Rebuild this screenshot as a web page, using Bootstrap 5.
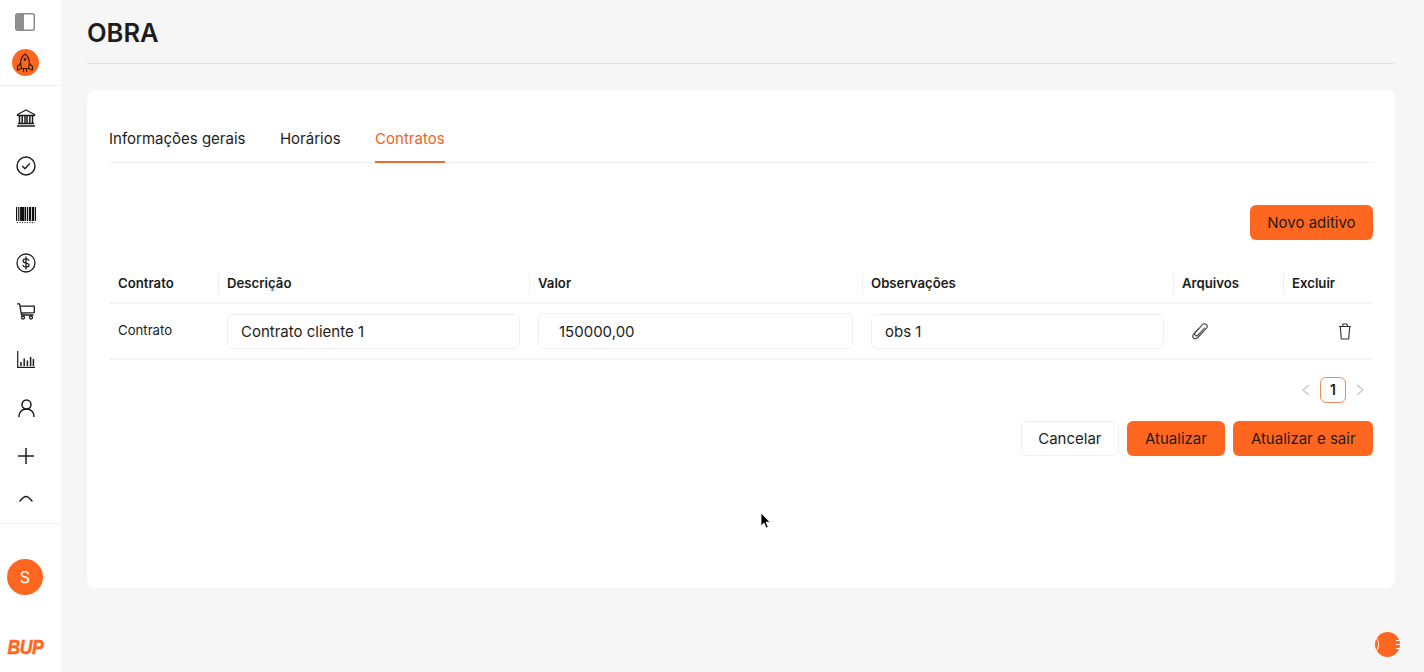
<!DOCTYPE html>
<html lang="pt">
<head>
<meta charset="utf-8">
<title>OBRA</title>
<link href="https://cdn.jsdelivr.net/npm/bootstrap@5.3.0/dist/css/bootstrap.min.css" rel="stylesheet">
<style>
html,body{height:100%;overflow:hidden}
body{background:#f6f6f6;font-family:Inter,"Liberation Sans",sans-serif;color:#1c1c1c;font-size:15px}
.app-shell{height:672px;position:relative}
.side-rail{width:61px;flex:none;background:#fff;height:672px}
.rail-top{height:86px;border-bottom:1px solid #f0f0f0;padding:13px 9px 0 0}
.rail-top svg{display:block}
.rail-top>svg{margin-left:-2px}
.rocket-dot{width:27px;height:27px;border-radius:50%;background:#ff6720;margin-top:18px;margin-left:-2px}
.rail-nav{height:438px;border-bottom:1px solid #f0f0f0;padding:8px 9px 0 0}
.rail-item{height:48.3px;color:#1c1c1c}
.rail-item.last-item{height:36px;padding-top:0}
.rail-foot{padding:35px 9px 0 0}
.avatar-dot{width:36px;height:36px;border-radius:50%;background:#ff6720;color:#fff;font-size:16px;margin-left:-2px}
.brand-mark{margin-top:41px;margin-left:-2px;color:#ff6720;font:italic 700 22px/22px "Liberation Sans",sans-serif;-webkit-text-stroke:.6px #ff6720;letter-spacing:-.5px;transform:scale(.8,.95)}
.main-area{padding:0 29px 0 26px;min-width:0}
.page-head{height:64px;border-bottom:1px solid #e2e2e2;margin-bottom:26px}
.page-title{font-size:25.5px;font-weight:600;line-height:29px;margin:0;padding-top:18px;color:#1c1c1c}
.sheet{background:#fff;border-radius:8px;height:498px;padding:27px 22px 0}
.tab-row{height:46px;border-bottom:1px solid #f0f0f0;gap:34.5px}
.tab-link{height:46px;line-height:44px;color:#1c1c1c;font-size:15px;text-decoration:none;white-space:nowrap}
.tab-link.on{color:#f26322;border-bottom:2px solid #ee6a35}
.brand-btn{background:#ff6720;border:0;color:#1c1c1c;font-size:15px;height:35px;border-radius:6px;padding:0 17.5px;line-height:35px;white-space:nowrap}
.brand-btn.wide-pad{padding:0 18.5px}
.plain-btn{background:#fff;border:1px solid #f0f0f0;color:#1c1c1c;font-size:15px;height:35px;border-radius:6px;padding:0 16px;line-height:33px}
.add-row{margin-top:42px;margin-bottom:25px}
.grid-table{table-layout:fixed;width:100%;margin:0;border-collapse:collapse}
.grid-table th{height:38px;font-size:13.2px;font-weight:600;padding:0 9px;border-bottom:2px solid #f5f5f5;position:relative;vertical-align:middle;color:#1c1c1c}
.grid-table th+th::before{content:"";position:absolute;left:0;top:9px;height:20px;width:1px;background:#efefef}
.grid-table td{height:56px;padding:0 9px;border-bottom:2px solid #f5f5f5;vertical-align:middle;font-size:13.2px;color:#1c1c1c}
.cell-input{width:100%;height:35px;border:1px solid #f0f0f0;border-radius:6px;padding:0 13px;font-size:15px;color:#1c1c1c;font-family:inherit;outline:0;background:#fff}
.cell-input.num{padding-left:20px;height:36px}
.clip-icon{margin-left:10px}
.trash-icon{margin-right:12px}
.pager-row{margin-top:17px;height:26px;gap:10px;padding-right:9px}
.pager-box{width:26px;height:26px;border:1px solid #f08a5a;border-radius:6px;font-size:14px;font-weight:600;line-height:24px;text-align:center}
.action-row{margin-top:18px;gap:8px}
.cursor-mark{position:absolute;left:760px;top:512px}
.help-dot{position:absolute;left:1375px;top:632px;width:25px;height:25px;border-radius:50%;background:#ff6720;overflow:hidden}
.help-dot::before{content:"";position:absolute;left:-7px;top:4px;width:11px;height:17px;border:1px solid #fff;border-radius:50%}
.help-dot::after{content:"";position:absolute;right:0;top:8px;width:4px;height:9px;border-top:1px solid #fff;border-bottom:1px solid #fff;background:linear-gradient(#fff,#fff) center/100% 1px no-repeat}
</style>
</head>
<body>
<div class="app-shell d-flex">
  <aside class="side-rail d-flex flex-column">
    <div class="rail-top d-flex flex-column align-items-center">
      <svg width="20" height="18" viewBox="0 0 20 18"><rect x=".75" y=".75" width="18.5" height="16.5" rx="2" fill="#fff" stroke="#8a8a8a" stroke-width="1.5"/><path d="M1 3a2 2 0 0 1 2-2h6v16H3a2 2 0 0 1-2-2z" fill="#8f8f8f"/></svg>
      <div class="rocket-dot d-flex align-items-center justify-content-center">
        <svg width="20" height="20" viewBox="0 0 20 20" fill="none" stroke="#3a1a08" stroke-width="1.2" stroke-linejoin="round" stroke-linecap="round"><path d="M10 1C13 3.5 14.5 7 14.5 10L13.5 15.5H6.500L5.500 10C5.500 7 7 3.500 10 1z"/><path d="M5.700 10.500L2.500 13.500V17L6.500 15.500M14.300 10.500L17.500 13.500V17L13.500 15.500"/><circle cx="10" cy="6.500" r=".8"/><path d="M8.500 15.500v3M11.500 15.500v3"/></svg>
      </div>
    </div>
    <nav class="rail-nav d-flex flex-column">
      <div class="rail-item d-flex align-items-center justify-content-center">
        <svg width="20" height="18" viewBox="0 0 20 18" fill="none" stroke="#1c1c1c" stroke-width="1.3"><path d="M1.500 5.500L10 1l8.500 4.500v1h-17z" stroke-linejoin="round"/><path d="M3.500 7v7M6.200 7v7M9 7v7M11 7v7M13.800 7v7M16.500 7v7" stroke-width="1.500"/><path d="M2 14.600h16M1 17h18" stroke-width="1.500"/></svg>
      </div>
      <div class="rail-item d-flex align-items-center justify-content-center">
        <svg width="20" height="20" viewBox="0 0 20 20" fill="none" stroke="#1c1c1c" stroke-width="1.400"><circle cx="10" cy="10" r="9"/><path d="M6.500 10.200l2.500 2.500 4.500-5" stroke-linecap="round" stroke-linejoin="round"/></svg>
      </div>
      <div class="rail-item d-flex align-items-center justify-content-center">
        <svg width="20" height="16" viewBox="0 0 20 16" stroke="#111" fill="none"><path stroke-width="1.200" d="M.6 0v14M2.800 0v14M9.500 0v14M11.500 0v14M19.400 0v14"/><path stroke-width="2.200" d="M5.200 0v14M7.400 0v14M14 0v14M17 0v14"/><path stroke-width="1.200" stroke-dasharray="1 1.500" d="M1 15.500h18"/></svg>
      </div>
      <div class="rail-item d-flex align-items-center justify-content-center">
        <svg width="20" height="20" viewBox="0 0 20 20" fill="none" stroke="#1c1c1c" stroke-width="1.300"><circle cx="10" cy="10" r="9"/><path d="M12.800 7.400C12.400 6.300 11.300 5.800 10 5.800c-1.600 0-2.900.7-2.900 2.100 0 3 5.900 1.300 5.900 4.200 0 1.400-1.400 2.100-3 2.100-1.400 0-2.600-.6-3-1.800M10 4v12" stroke-linecap="round"/></svg>
      </div>
      <div class="rail-item d-flex align-items-center justify-content-center">
        <svg width="18" height="17" viewBox="0 0 18 17" fill="none" stroke="#1c1c1c" stroke-width="1.300"><path d="M0 .8h2.600L4.500 12h12" stroke-linejoin="round"/><path d="M3 3.200h14.300V9.600L4.200 10" stroke-linejoin="round"/><circle cx="6" cy="14.500" r="1.500"/><circle cx="14" cy="14.500" r="1.500"/></svg>
      </div>
      <div class="rail-item d-flex align-items-center justify-content-center">
        <svg width="18" height="17" viewBox="0 0 18 17" fill="none" stroke="#1c1c1c"><path stroke-width="1.200" d="M.7 0v16.300H18"/><path stroke-width="1.500" d="M4 11v4M7.200 7.500V15M10.400 9.500V15M13.600 6v9M16.400 8v7"/></svg>
      </div>
      <div class="rail-item d-flex align-items-center justify-content-center">
        <svg width="17" height="18" viewBox="0 0 17 18" fill="none" stroke="#1c1c1c" stroke-width="1.500"><circle cx="8.500" cy="5.500" r="4.500"/><path d="M1 17.500c0-4.500 3.200-7.500 7.500-7.500S16 13 16 17.500" stroke-linecap="round"/></svg>
      </div>
      <div class="rail-item d-flex align-items-center justify-content-center">
        <svg width="16" height="16" viewBox="0 0 16 16" stroke="#1c1c1c" stroke-width="1.500"><path d="M8 0v16M0 8h16"/></svg>
      </div>
      <div class="rail-item last-item d-flex align-items-center justify-content-center">
        <svg width="14" height="7" viewBox="0 0 14 7" fill="none" stroke="#1c1c1c" stroke-width="1.400"><path d="M1 6C3 3.500 5 1.500 7 1.500S11 3.500 13 6" stroke-linecap="round"/></svg>
      </div>
    </nav>
    <div class="rail-foot d-flex flex-column align-items-center">
      <div class="avatar-dot d-flex align-items-center justify-content-center">S</div>
      <div class="brand-mark">BUP</div>
    </div>
  </aside>
  <main class="main-area flex-grow-1">
    <header class="page-head"><h1 class="page-title">OBRA</h1></header>
    <section class="sheet">
      <div class="tab-row d-flex">
        <a class="tab-link" href="#">Informações gerais</a>
        <a class="tab-link" href="#">Horários</a>
        <a class="tab-link on" href="#">Contratos</a>
      </div>
      <div class="add-row d-flex justify-content-end"><button class="brand-btn" type="button">Novo aditivo</button></div>
      <table class="grid-table">
        <colgroup><col style="width:109px"><col style="width:311px"><col style="width:333px"><col style="width:311px"><col style="width:110px"><col></colgroup>
        <thead><tr><th>Contrato</th><th>Descrição</th><th>Valor</th><th>Observações</th><th>Arquivos</th><th>Excluir</th></tr></thead>
        <tbody><tr>
          <td>Contrato</td>
          <td><input class="cell-input" value="Contrato cliente 1"></td>
          <td><input class="cell-input num" value="150000,00"></td>
          <td><input class="cell-input" value="obs 1"></td>
          <td><svg class="clip-icon" width="17" height="17" viewBox="0 0 17 17" fill="none" stroke="#444" stroke-width="1.100" stroke-linecap="round"><path d="M6.500 5.500L2 10.500c-1.800 2-1.500 3.500-.5 4.500s2.800 1 4.300-.5l8.500-9c1.500-1.700 1.200-3-.3-4.200-1.200-.9-2.700-.6-3.800.5L3.500 9.500c-1 1.200-1 2.200-.3 2.900s1.800.6 2.800-.4l6.500-7"/></svg></td>
          <td class="text-end"><svg class="trash-icon" width="14" height="17" viewBox="0 0 14 17" fill="none" stroke="#333" stroke-width="1.100" stroke-linejoin="round"><path d="M1 3.500h12M4.500 3.500l.6-2.500h3.800l.6 2.500M2.300 3.500l1 12.500h7.400l1-12.500"/></svg></td>
        </tr></tbody>
      </table>
      <div class="pager-row d-flex justify-content-end align-items-center">
        <svg width="8" height="12" viewBox="0 0 8 12" fill="none" stroke="#c4c4c4" stroke-width="1.200"><path d="M7 1L1 6l6 5"/></svg>
        <div class="pager-box">1</div>
        <svg width="8" height="12" viewBox="0 0 8 12" fill="none" stroke="#c4c4c4" stroke-width="1.200"><path d="M1 1l6 5-6 5"/></svg>
      </div>
      <div class="action-row d-flex justify-content-end">
        <button class="plain-btn" type="button">Cancelar</button>
        <button class="brand-btn wide-pad" type="button">Atualizar</button>
        <button class="brand-btn" type="button">Atualizar e sair</button>
      </div>
    </section>
  </main>
  <svg class="cursor-mark" width="12" height="18" viewBox="0 0 12 18"><path d="M1 1v13l3-3 2.200 5 2-1-2.200-4.800h4z" fill="#000" stroke="#fff" stroke-width=".8"/></svg>
  <div class="help-dot"></div>
</div>
</body>
</html>
